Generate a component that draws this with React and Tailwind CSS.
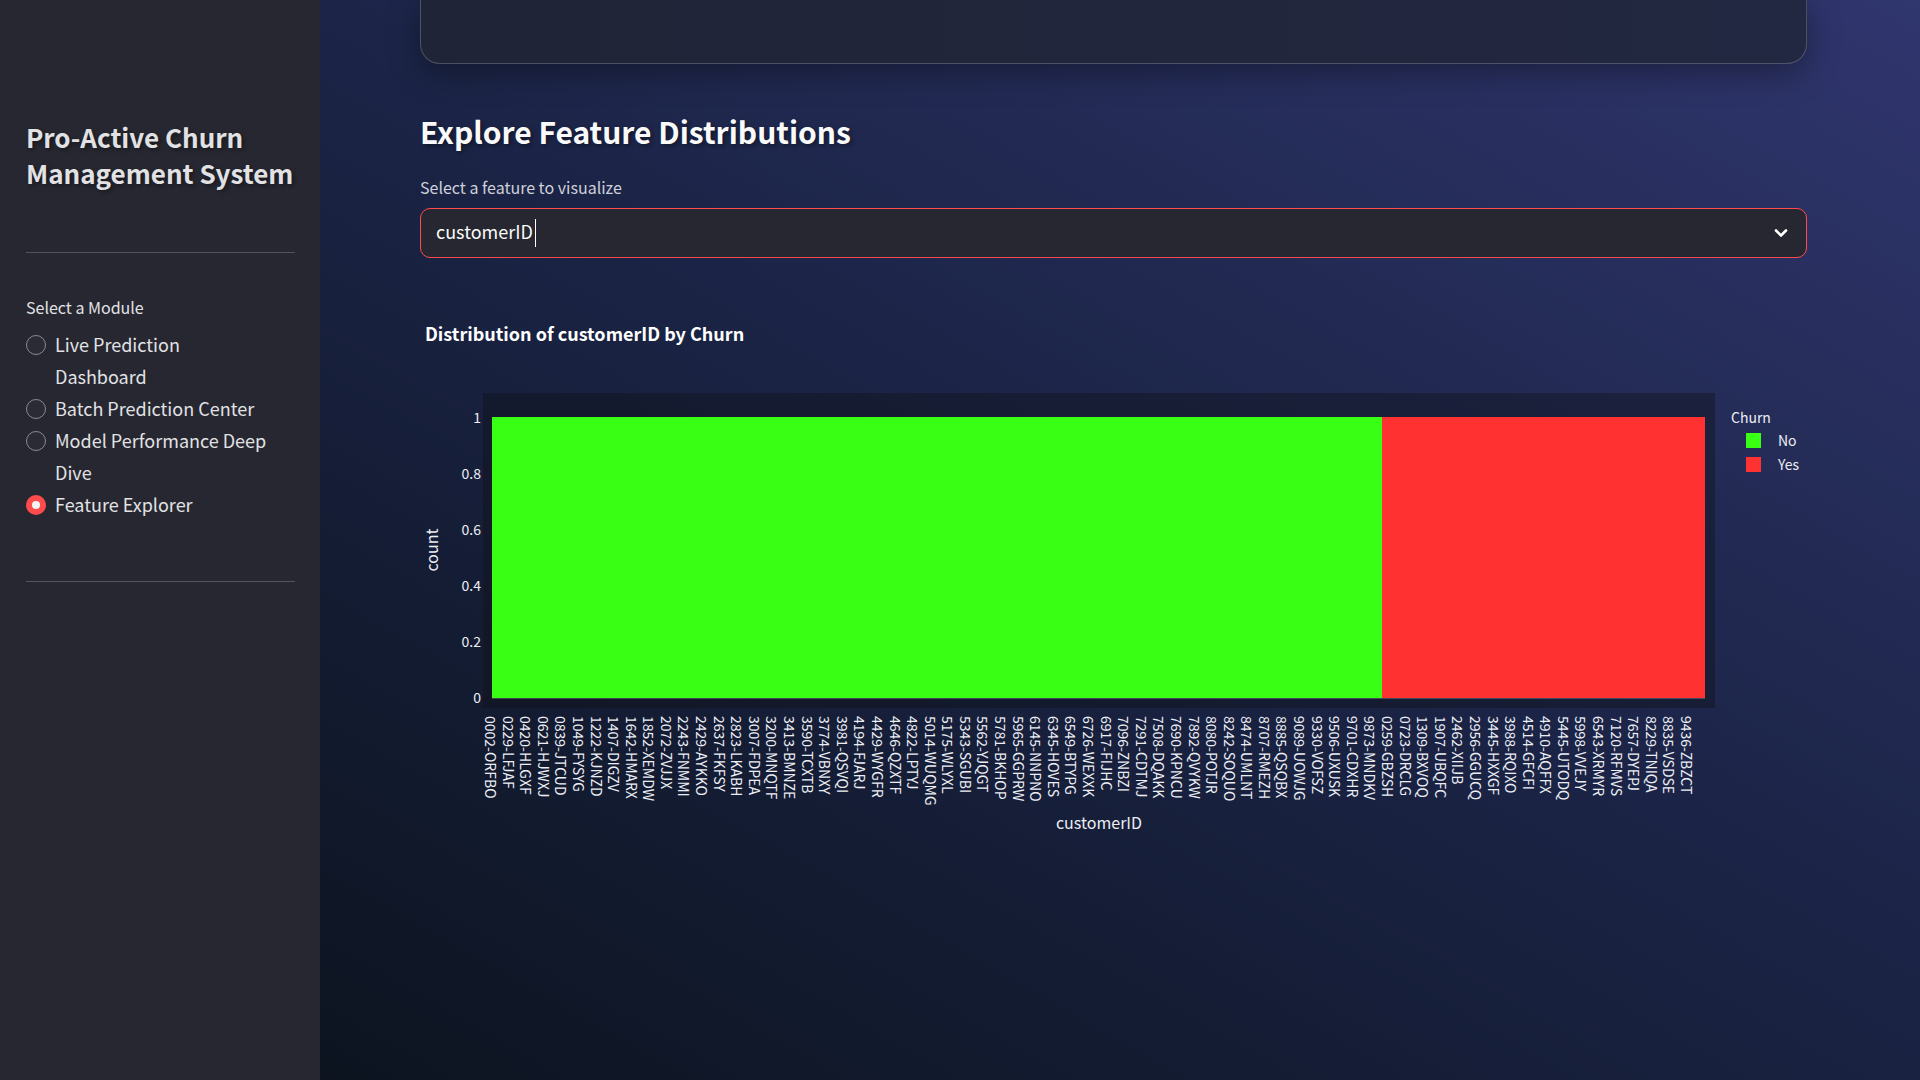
import { useState } from "react";

const MODULES = [
  "Live Prediction Dashboard",
  "Batch Prediction Center",
  "Model Performance Deep Dive",
  "Feature Explorer",
];

const CUSTOMER_IDS =
  "0002-ORFBO 0229-LFJAF 0420-HLGXF 0621-HJWXJ 0839-JTCUD 1049-FYSYG 1222-KJNZD 1407-DIGZV 1642-HMARX 1852-XEMDW 2072-ZVJJX 2243-FNMMI 2429-AYKKO 2637-FKFSY 2823-LKABH 3007-FDPEA 3200-MNQTF 3413-BMNZE 3590-TCXTB 3774-VBNXY 3981-QSVQI 4194-FJARJ 4429-WYGFR 4646-QZXTF 4822-LPTYJ 5014-WUQMG 5175-WLYXL 5343-SGUBI 5562-YJQGT 5781-BKHOP 5965-GGPRW 6145-NNPNO 6345-HOVES 6549-BTYPG 6726-WEXXK 6917-FIJHC 7096-ZNBZI 7291-CDTMJ 7508-DQAKK 7690-KPNCU 7892-QVYKW 8080-POTJR 8242-SOQUO 8474-UMLNT 8707-RMEZH 8885-QSQBX 9089-UOWJG 9330-VOFSZ 9506-UXUSK 9701-CDXHR 9873-MNDKV 0259-GBZSH 0723-DRCLG 1309-BXVOQ 1907-UBQFC 2462-XIIJB 2956-GGUCQ 3445-HXXGF 3988-RQIXO 4514-GFCFI 4910-AQFFX 5445-UTODQ 5998-VVEJY 6543-XRMYR 7120-RFMVS 7657-DYEPJ 8229-TNIQA 8835-VSDSE 9436-ZBZCT".split(
    " "
  );

const Y_TICKS = ["1", "0.8", "0.6", "0.4", "0.2", "0"];

function Sidebar() {
  const [selected, setSelected] = useState("Feature Explorer");
  return (
    <aside className="w-80 shrink-0 bg-[#262730] pt-[119px] pr-[25px] pl-[26px] text-[#e2e2e5]">
      <h1 className="text-[26px] leading-9 font-semibold whitespace-nowrap [text-shadow:2px_2px_4px_rgba(0,0,0,0.4)]">
        Pro-Active Churn
        <br />
        Management System
      </h1>
      <hr className="mt-[61px] border-[#53545c]" />
      <fieldset className="mt-[42px]">
        <legend className="mb-[9px] text-base leading-6">Select a Module</legend>
        {MODULES.map((name) => (
          <label key={name} className="flex gap-[9px] pr-6 text-[18px] leading-8">
            <input
              type="radio"
              name="module"
              checked={selected === name}
              onChange={() => setSelected(name)}
              className="mt-[7px] size-5 shrink-0 appearance-none rounded-full border border-[#8a8b94] bg-[#2a2b35] checked:border-6 checked:border-[#ff4b4b] checked:bg-[#f4f4f6]"
            />
            <span>{name}</span>
          </label>
        ))}
      </fieldset>
      <hr className="mt-[61px] border-[#53545c]" />
    </aside>
  );
}

function FeatureSelect() {
  const [feature, setFeature] = useState("customerID");
  return (
    <div>
      <label htmlFor="feature" className="block text-base leading-6 text-[#cfd1da]">
        Select a feature to visualize
      </label>
      <div className="mt-[9px] flex h-[50px] items-center rounded-[10px] border border-[#ff4b4b] bg-[#262730] px-[15px]">
        <input
          id="feature"
          type="text"
          role="combobox"
          aria-expanded="false"
          value={feature}
          onChange={(e) => setFeature(e.target.value)}
          className="field-sizing-content bg-transparent pb-1 text-[18px] leading-7 text-[#fafafa] outline-none"
        />
        <span className="ml-0.5 h-7 w-px bg-white" />
        <button type="button" aria-label="Open options" className="ml-auto flex size-5 items-center justify-center text-white">
          <svg viewBox="0 0 20 20" className="size-5" fill="none" stroke="currentColor" strokeWidth="2.6" strokeLinecap="round" strokeLinejoin="round">
            <path d="M5 7.5 10 12.5 15 7.5" />
          </svg>
        </button>
      </div>
    </div>
  );
}

function DistributionChart() {
  return (
    <svg viewBox="0 0 1387 562" role="img" aria-label="Distribution of customerID by Churn" className="mt-[50px] block h-auto w-full text-[#eceef4]" fill="currentColor">
      <text x="5" y="33" className="text-[18px] font-bold" fill="#ffffff">
        Distribution of customerID by Churn
      </text>

      <rect x="63" y="85" width="1232" height="315" fill="#0e1117" fillOpacity="0.4" />
      <rect x="72" y="109" width="890" height="281" fill="#39ff14" />
      <rect x="962" y="109" width="323" height="281" fill="#ff3131" />
      <rect x="72" y="390" width="1213" height="1" fill="#ffffff" fillOpacity="0.2" />

      <g className="text-[14px]" textAnchor="end">
        {Y_TICKS.map((tick, i) => (
          <text key={tick} x="61" y={115 + i * 56}>
            {tick}
          </text>
        ))}
      </g>
      <text transform="translate(18 242) rotate(-90)" textAnchor="middle" className="text-base">
        count
      </text>

      <g className="text-[14px]">
        {CUSTOMER_IDS.map((id, i) => (
          <text key={id} transform={`translate(${65 + (i * 1196) / 68} 408) rotate(90)`}>
            {id}
          </text>
        ))}
      </g>
      <text x="679" y="521" textAnchor="middle" className="text-base">
        customerID
      </text>

      <g className="text-[14px]">
        <text x="1311" y="115">Churn</text>
        <rect x="1326" y="125" width="15" height="15" fill="#39ff14" />
        <text x="1358" y="138">No</text>
        <rect x="1326" y="149" width="15" height="15" fill="#ff3131" />
        <text x="1358" y="162">Yes</text>
      </g>
    </svg>
  );
}

export default function App() {
  return (
    <div className="flex min-h-screen bg-[linear-gradient(to_top_right,#0a1119,#1b2446_56%,#30366e)] font-['Noto_Sans_CJK_SC','Noto_Sans',sans-serif]">
      <Sidebar />
      <main className="min-w-0 flex-1 overflow-hidden pr-[113px] pl-25">
        <div className="h-16 rounded-b-[20px] border border-t-0 border-white/20 bg-[linear-gradient(to_right,#1f2436,#232842)] shadow-[0_8px_32px_rgba(0,0,0,0.37)]" />
        <h2 className="mt-[47px] mb-6 text-[30px] leading-10 font-semibold text-[#fafafa] [text-shadow:2px_2px_4px_rgba(0,0,0,0.4)]">
          Explore Feature Distributions
        </h2>
        <FeatureSelect />
        <DistributionChart />
      </main>
    </div>
  );
}
